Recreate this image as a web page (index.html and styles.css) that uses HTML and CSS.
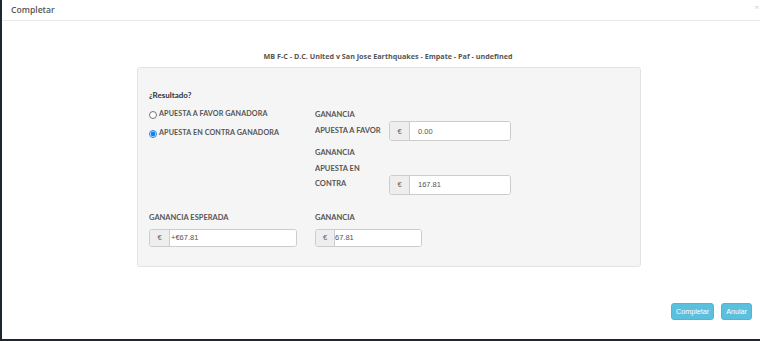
FILE: index.html
```html
<!DOCTYPE html>
<html lang="es">
<head>
  <meta charset="UTF-8">
  <title>Completar</title>
  <link rel="stylesheet" href="styles.css">
</head>
<body>
  <div class="modal">
    <div class="modal-header">
      <h4>Completar</h4>
      <span class="close">&times;</span>
    </div>

    <div class="modal-body">
      <p class="match">MB F-C - D.C. United v San Jose Earthquakes - Empate - Paf - undefined</p>

      <div class="well">
        <div class="question">¿Resultado?</div>

        <div class="row">
          <!-- Result radios -->
          <div class="col-left radios">
            <label class="radio"><input type="radio" name="resultado"> APUESTA A FAVOR GANADORA</label>
            <label class="radio"><input type="radio" name="resultado" checked> APUESTA EN CONTRA GANADORA</label>
          </div>

          <!-- Gains per bet -->
          <div class="col-right">
            <div class="field">
              <span class="field-label">GANANCIA APUESTA A FAVOR</span>
              <div class="input-group tall wide">
                <span class="addon">€</span>
                <input type="text" value="0.00">
              </div>
            </div>
            <div class="field second">
              <span class="field-label">GANANCIA APUESTA EN CONTRA</span>
              <div class="input-group tall wide">
                <span class="addon">€</span>
                <input type="text" value="167.81">
              </div>
            </div>
          </div>
        </div>

        <div class="row totals">
          <div class="col-left">
            <div class="total-label">GANANCIA ESPERADA</div>
            <div class="input-group expected">
              <span class="addon">€</span>
              <input type="text" class="tight" value="+€67.81">
            </div>
          </div>
          <div class="col-right">
            <div class="total-label">GANANCIA</div>
            <div class="input-group gain">
              <span class="addon narrow">€</span>
              <input type="text" class="tighter" value="67.81">
            </div>
          </div>
        </div>
      </div>
    </div>

    <div class="modal-footer">
      <button class="btn">Completar</button>
      <button class="btn">Anular</button>
    </div>
  </div>
</body>
</html>
```

FILE: styles.css
```css
body {
  margin: 0;
  background: #1d2631;
  font-family: "Open Sans", Arial, sans-serif;
  color: #555;
}
.modal {
  margin-left: 2px;
  height: 339px;
  background: #fff;
  display: flex;
  flex-direction: column;
}
.modal-header {
  height: 20px;
  border-bottom: 1px solid #eaeaea;
  display: flex;
  align-items: center;
  justify-content: space-between;
  padding: 0 1px 0 9px;
}
.modal-header h4 {
  margin: 0;
  font-size: 8.6px;
  font-weight: 600;
  color: #555;
}
.close {
  font-size: 8px;
  color: #ccc;
  align-self: flex-start;
  margin-top: 1px;
}
.modal-body {
  flex: 1;
  padding-top: 29px;
}
.match {
  margin: 0 0 5px 0;
  padding-left: 14px;
  text-align: center;
  font-size: 7.2px;
  font-weight: 700;
  line-height: 12px;
  color: #555;
}
.well {
  margin-left: 135px;
  width: 480px;
  height: 178px;
  padding: 20px 11px 0 11px;
  background: #f5f5f5;
  border: 1px solid #e3e3e3;
  border-radius: 3px;
}
.question {
  font-family: Lato, sans-serif;
  font-size: 8px;
  font-weight: 700;
  line-height: 15px;
  color: #333;
}
.row {
  display: flex;
  margin-top: 3px;
}
.col-left {
  width: 166px;
}
.radios {
  margin-top: -2px;
}
.col-right {
  flex: 1;
}
.radio {
  display: flex;
  align-items: center;
  height: 19px;
  font-family: Lato, sans-serif;
  font-size: 7.2px;
  font-weight: 700;
  letter-spacing: 0.1px;
  color: #555;
}
.radio input {
  width: 8px;
  height: 8px;
  margin: 2px 2px 0 0;
  accent-color: #1a7ee6;
}
.field {
  display: flex;
  align-items: flex-end;
  padding-top: 1px;
}
.field.second {
  margin-top: 4px;
  padding-top: 0;
}
.field-label {
  width: 70px;
  padding-right: 4px;
  padding-bottom: 3px;
  font-family: Lato, sans-serif;
  font-size: 7.5px;
  font-weight: 700;
  line-height: 15.5px;
  color: #555;
}
.input-group {
  display: flex;
  height: 18px;
  border: 1px solid #ccc;
  border-radius: 3px;
  background: #fff;
  box-sizing: border-box;
  overflow: hidden;
}
.input-group.tall {
  height: 20px;
}
.input-group.wide {
  width: 122px;
}
.input-group.expected {
  width: 148px;
}
.input-group.gain {
  width: 107px;
}
.addon {
  width: 19px;
  flex-shrink: 0;
  background: #eee;
  border-right: 1px solid #ccc;
  display: flex;
  align-items: center;
  justify-content: center;
  font-family: "Liberation Sans", Arial, sans-serif;
  font-size: 7.5px;
  color: #666;
}
.addon.narrow {
  width: 18px;
}
.input-group input {
  flex: 1;
  min-width: 0;
  border: none;
  outline: none;
  padding: 0 0 0 8px;
  font-family: "Liberation Sans", Arial, sans-serif;
  font-size: 7.5px;
  color: #555;
  background: #fff;
}
.input-group input.tight {
  padding-left: 1px;
}
.input-group input.tighter {
  padding-left: 0;
}
.totals {
  margin-top: 15px;
}
.total-label {
  font-family: Lato, sans-serif;
  font-size: 7.5px;
  font-weight: 700;
  line-height: 15px;
  margin-bottom: 4px;
  color: #555;
}
.modal-footer {
  display: flex;
  justify-content: flex-end;
  gap: 7px;
  padding: 0 8px 19px 0;
}
.btn {
  height: 17px;
  padding: 0 4px;
  border: 1px solid #46b8da;
  border-radius: 3px;
  background: #5bc0de;
  color: #fff;
  font-family: "Liberation Sans", Arial, sans-serif;
  font-size: 7.2px;
  cursor: pointer;
}
```
